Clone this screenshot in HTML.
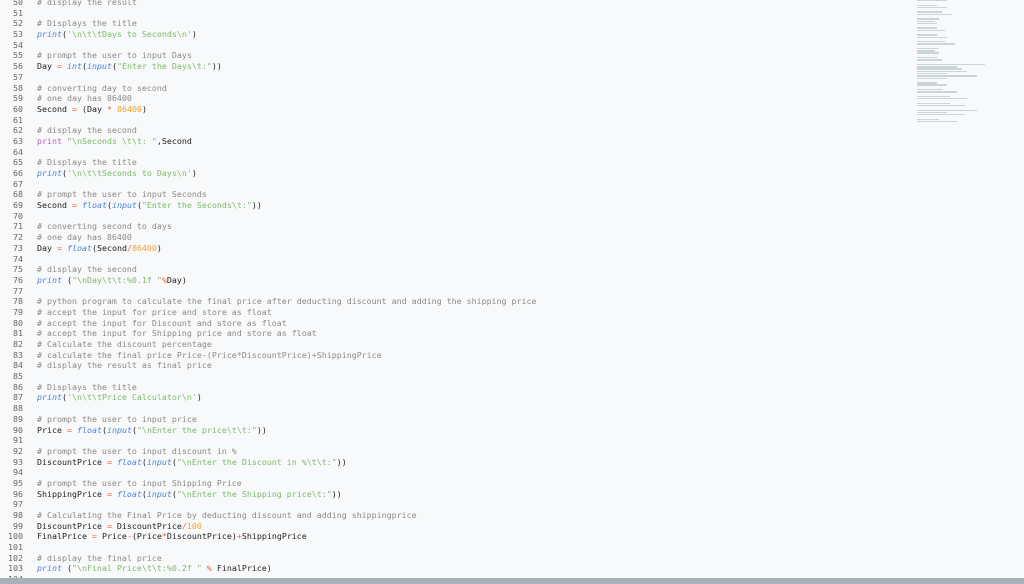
<!DOCTYPE html>
<html><head><meta charset="utf-8"><style>
html,body{margin:0;width:1024px;height:584px;overflow:hidden;}
body{background:#f8f9fa;position:relative;font-family:"DejaVu Sans Mono","Liberation Mono",monospace;}
#code{position:absolute;top:-3px;left:0;font-size:8.3px;line-height:10.69px;color:#222;}
.l{height:10.69px;white-space:pre}
.n{display:inline-block;width:23px;text-align:right;color:#666;margin-right:14px}
.c{color:#8a8a8a}
.f{color:#4a86d8;font-style:italic}
.p{color:#b05cc0}
.s{color:#7cba6c}
.o{color:#f0603c}
.d{color:#f5a030}
#status{position:absolute;left:0;top:578px;width:1024px;height:6px;background:#a9b0b8}
#mini{position:absolute;left:917px;top:0;width:70px;height:125px;opacity:.45}
#mini div{height:1.4px;margin-bottom:.9px;background:#9aa}
</style></head><body>
<div id="code">
<div class="l"><span class="n">50</span><span class="c"># display the result</span></div>
<div class="l"><span class="n">51</span></div>
<div class="l"><span class="n">52</span><span class="c"># Displays the title</span></div>
<div class="l"><span class="n">53</span><span class="f">print</span>(<span class="s">'\n\t\tDays to Seconds\n'</span>)</div>
<div class="l"><span class="n">54</span></div>
<div class="l"><span class="n">55</span><span class="c"># prompt the user to input Days</span></div>
<div class="l"><span class="n">56</span>Day <span class="o">=</span> <span class="f">int</span>(<span class="f">input</span>(<span class="s">"Enter the Days\t:"</span>))</div>
<div class="l"><span class="n">57</span></div>
<div class="l"><span class="n">58</span><span class="c"># converting day to second</span></div>
<div class="l"><span class="n">59</span><span class="c"># one day has 86400</span></div>
<div class="l"><span class="n">60</span>Second <span class="o">=</span> (Day <span class="o">*</span> <span class="d">86400</span>)</div>
<div class="l"><span class="n">61</span></div>
<div class="l"><span class="n">62</span><span class="c"># display the second</span></div>
<div class="l"><span class="n">63</span><span class="p">print</span> <span class="s">"\nSeconds \t\t: "</span>,Second</div>
<div class="l"><span class="n">64</span></div>
<div class="l"><span class="n">65</span><span class="c"># Displays the title</span></div>
<div class="l"><span class="n">66</span><span class="f">print</span>(<span class="s">'\n\t\tSeconds to Days\n'</span>)</div>
<div class="l"><span class="n">67</span></div>
<div class="l"><span class="n">68</span><span class="c"># prompt the user to input Seconds</span></div>
<div class="l"><span class="n">69</span>Second <span class="o">=</span> <span class="f">float</span>(<span class="f">input</span>(<span class="s">"Enter the Seconds\t:"</span>))</div>
<div class="l"><span class="n">70</span></div>
<div class="l"><span class="n">71</span><span class="c"># converting second to days</span></div>
<div class="l"><span class="n">72</span><span class="c"># one day has 86400</span></div>
<div class="l"><span class="n">73</span>Day <span class="o">=</span> <span class="f">float</span>(Second<span class="o">/</span><span class="d">86400</span>)</div>
<div class="l"><span class="n">74</span></div>
<div class="l"><span class="n">75</span><span class="c"># display the second</span></div>
<div class="l"><span class="n">76</span><span class="f">print</span> (<span class="s">"\nDay\t\t:%0.1f "</span><span class="o">%</span>Day)</div>
<div class="l"><span class="n">77</span></div>
<div class="l"><span class="n">78</span><span class="c"># python program to calculate the final price after deducting discount and adding the shipping price</span></div>
<div class="l"><span class="n">79</span><span class="c"># accept the input for price and store as float</span></div>
<div class="l"><span class="n">80</span><span class="c"># accept the input for Discount and store as float</span></div>
<div class="l"><span class="n">81</span><span class="c"># accept the input for Shipping price and store as float</span></div>
<div class="l"><span class="n">82</span><span class="c"># Calculate the discount percentage</span></div>
<div class="l"><span class="n">83</span><span class="c"># calculate the final price Price-(Price*DiscountPrice)+ShippingPrice</span></div>
<div class="l"><span class="n">84</span><span class="c"># display the result as final price</span></div>
<div class="l"><span class="n">85</span></div>
<div class="l"><span class="n">86</span><span class="c"># Displays the title</span></div>
<div class="l"><span class="n">87</span><span class="f">print</span>(<span class="s">'\n\t\tPrice Calculator\n'</span>)</div>
<div class="l"><span class="n">88</span></div>
<div class="l"><span class="n">89</span><span class="c"># prompt the user to input price</span></div>
<div class="l"><span class="n">90</span>Price <span class="o">=</span> <span class="f">float</span>(<span class="f">input</span>(<span class="s">"\nEnter the price\t\t:"</span>))</div>
<div class="l"><span class="n">91</span></div>
<div class="l"><span class="n">92</span><span class="c"># prompt the user to input discount in %</span></div>
<div class="l"><span class="n">93</span>DiscountPrice <span class="o">=</span> <span class="f">float</span>(<span class="f">input</span>(<span class="s">"\nEnter the Discount in %\t\t:"</span>))</div>
<div class="l"><span class="n">94</span></div>
<div class="l"><span class="n">95</span><span class="c"># prompt the user to input Shipping Price</span></div>
<div class="l"><span class="n">96</span>ShippingPrice <span class="o">=</span> <span class="f">float</span>(<span class="f">input</span>(<span class="s">"\nEnter the Shipping price\t:"</span>))</div>
<div class="l"><span class="n">97</span></div>
<div class="l"><span class="n">98</span><span class="c"># Calculating the Final Price by deducting discount and adding shippingprice</span></div>
<div class="l"><span class="n">99</span>DiscountPrice <span class="o">=</span> DiscountPrice<span class="o">/</span><span class="d">100</span></div>
<div class="l"><span class="n">100</span>FinalPrice <span class="o">=</span> Price<span class="o">-</span>(Price<span class="o">*</span>DiscountPrice)<span class="o">+</span>ShippingPrice</div>
<div class="l"><span class="n">101</span></div>
<div class="l"><span class="n">102</span><span class="c"># display the final price</span></div>
<div class="l"><span class="n">103</span><span class="f">print</span> (<span class="s">"\nFinal Price\t\t:%0.2f "</span> <span class="o">%</span> FinalPrice)</div>
<div class="l"><span class="n">104</span></div>
</div>
<div id="mini">
<div style="width:30px"></div><div style="width:0"></div><div style="width:20px"></div><div style="width:30px"></div><div style="width:0"></div><div style="width:25px"></div><div style="width:35px"></div><div style="width:0"></div><div style="width:22px"></div><div style="width:18px"></div><div style="width:20px"></div><div style="width:0"></div><div style="width:20px"></div><div style="width:28px"></div><div style="width:0"></div><div style="width:20px"></div><div style="width:30px"></div><div style="width:0"></div><div style="width:28px"></div><div style="width:38px"></div><div style="width:0"></div><div style="width:22px"></div><div style="width:18px"></div><div style="width:22px"></div><div style="width:0"></div><div style="width:20px"></div><div style="width:25px"></div><div style="width:0"></div><div style="width:68px"></div><div style="width:40px"></div><div style="width:45px"></div><div style="width:50px"></div><div style="width:30px"></div><div style="width:60px"></div><div style="width:30px"></div><div style="width:0"></div><div style="width:20px"></div><div style="width:30px"></div><div style="width:0"></div><div style="width:26px"></div><div style="width:40px"></div><div style="width:0"></div><div style="width:33px"></div><div style="width:50px"></div><div style="width:0"></div><div style="width:33px"></div><div style="width:48px"></div><div style="width:0"></div><div style="width:60px"></div><div style="width:30px"></div><div style="width:48px"></div><div style="width:0"></div><div style="width:22px"></div><div style="width:40px"></div>
</div>
<div id="status"></div>
</body></html>
